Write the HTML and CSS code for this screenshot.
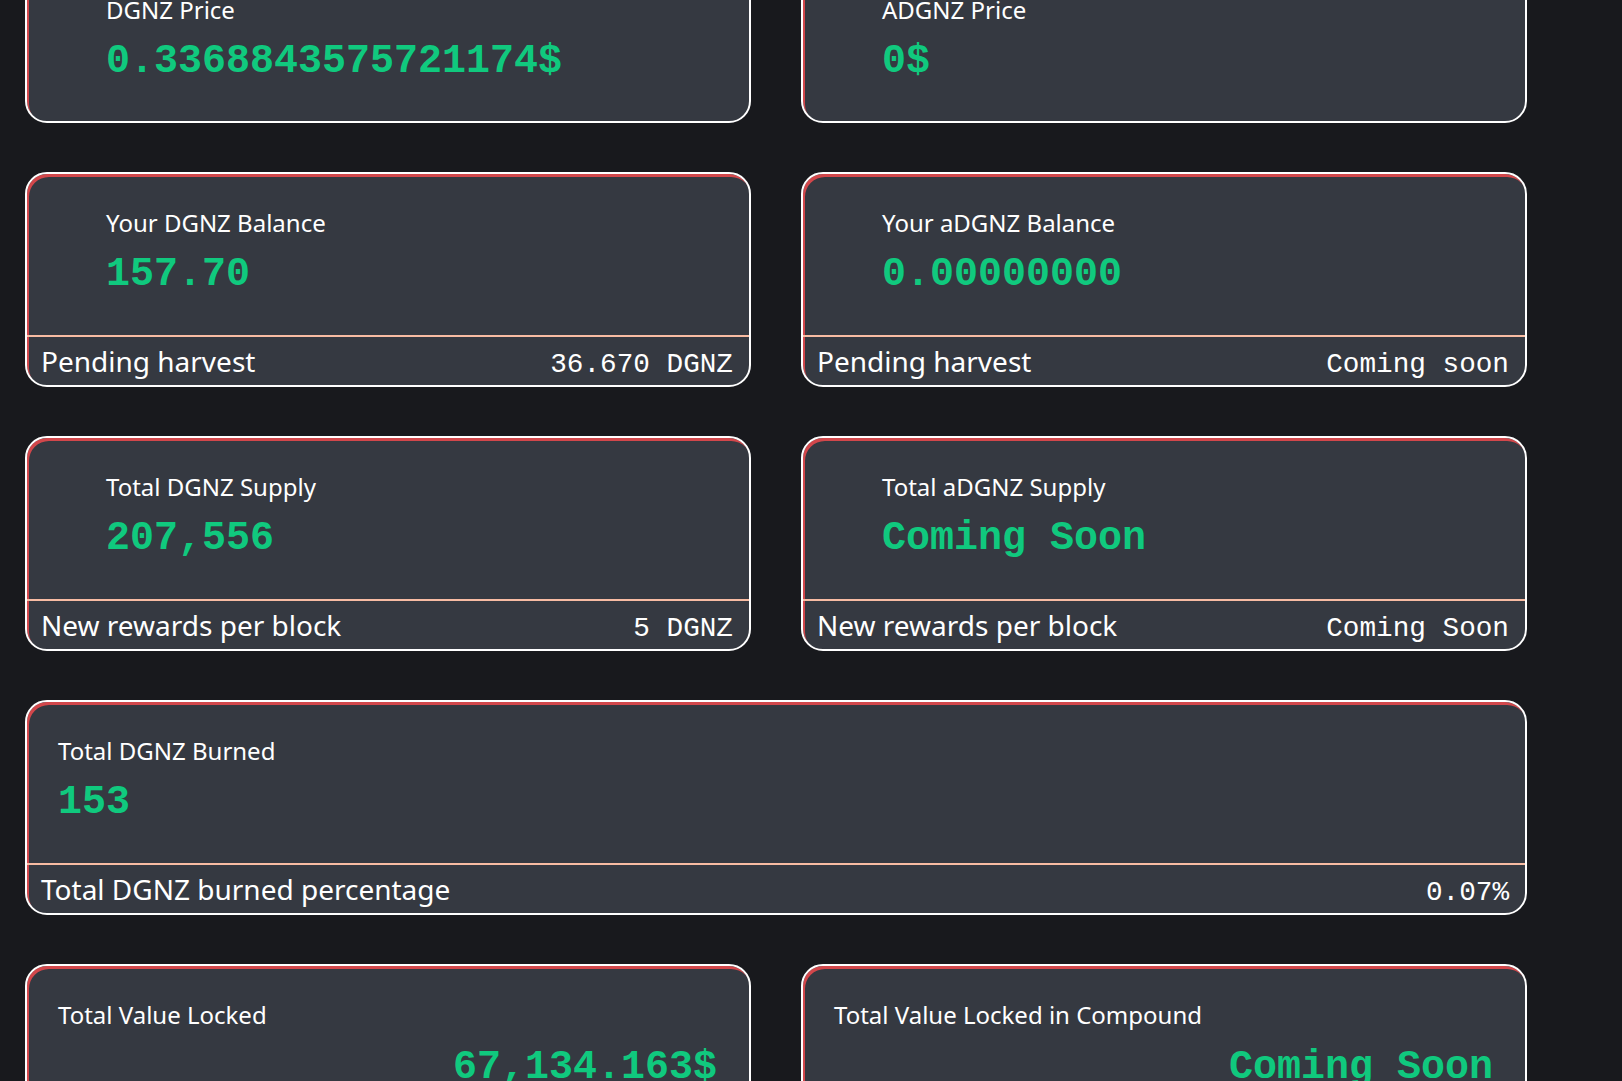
FILE: index.html
```html
<!DOCTYPE html>
<html lang="en">
<head>
<meta charset="utf-8">
<title>DGNZ Dashboard</title>
<link rel="stylesheet" href="styles.css">
</head>
<body>
<main class="dash">
  <section class="card">
    <div class="card-body indent short">
      <div class="label">DGNZ Price</div>
      <div class="value">0.3368843575721174$</div>
    </div>
  </section>
  <section class="card">
    <div class="card-body indent short">
      <div class="label">ADGNZ Price</div>
      <div class="value">0$</div>
    </div>
  </section>

  <section class="card">
    <div class="card-body indent">
      <div class="label">Your DGNZ Balance</div>
      <div class="value">157.70</div>
    </div>
    <div class="card-foot">
      <span class="foot-label">Pending harvest</span>
      <span class="foot-value">36.670 DGNZ</span>
    </div>
  </section>
  <section class="card">
    <div class="card-body indent">
      <div class="label">Your aDGNZ Balance</div>
      <div class="value">0.00000000</div>
    </div>
    <div class="card-foot">
      <span class="foot-label">Pending harvest</span>
      <span class="foot-value">Coming soon</span>
    </div>
  </section>

  <section class="card">
    <div class="card-body indent">
      <div class="label">Total DGNZ Supply</div>
      <div class="value">207,556</div>
    </div>
    <div class="card-foot">
      <span class="foot-label">New rewards per block</span>
      <span class="foot-value">5 DGNZ</span>
    </div>
  </section>
  <section class="card">
    <div class="card-body indent">
      <div class="label">Total aDGNZ Supply</div>
      <div class="value">Coming Soon</div>
    </div>
    <div class="card-foot">
      <span class="foot-label">New rewards per block</span>
      <span class="foot-value">Coming Soon</span>
    </div>
  </section>

  <section class="card wide">
    <div class="card-body">
      <div class="label">Total DGNZ Burned</div>
      <div class="value">153</div>
    </div>
    <div class="card-foot">
      <span class="foot-label">Total DGNZ burned percentage</span>
      <span class="foot-value">0.07%</span>
    </div>
  </section>

  <section class="card">
    <div class="card-body">
      <div class="label">Total Value Locked</div>
      <div class="value right">67,134.163$</div>
    </div>
  </section>
  <section class="card">
    <div class="card-body">
      <div class="label">Total Value Locked in Compound</div>
      <div class="value right">Coming Soon</div>
    </div>
  </section>
</main>
</body>
</html>
```

FILE: styles.css
```css
html, body {
  margin: 0;
  padding: 0;
  background: #18191d;
}

body {
  font-family: "Noto Sans", "Open Sans", sans-serif;
  color: #ffffff;
}

.dash {
  display: grid;
  grid-template-columns: 726px 726px;
  column-gap: 50px;
  row-gap: 49px;
  margin: -41px 0 40px 25px;
  width: 1502px;
}

.card {
  background: #353941;
  border: 2px solid #ffffff;
  border-radius: 22px;
  box-shadow: inset 2px 3px 0 #d2474b;
  overflow: hidden;
  display: flex;
  flex-direction: column;
}

.card.wide {
  grid-column: 1 / span 2;
}

.card-body {
  height: 161px;
  box-sizing: border-box;
  padding: 33px 32px 0 31px;
}

.card-body.indent {
  padding-left: 79px;
}

.card-body.short {
  height: 160px;
}

.label {
  font-size: 24px;
  line-height: 32px;
  white-space: nowrap;
}

.value {
  margin-top: 13px;
  font-family: "Liberation Mono", "Courier New", monospace;
  font-weight: 700;
  font-size: 40px;
  line-height: 45px;
  color: #10c97e;
  white-space: nowrap;
}

.value.right {
  text-align: right;
  margin-top: 14px;
}

.card-foot {
  border-top: 2px solid #f8bca3;
  height: 50px;
  box-sizing: border-box;
  display: flex;
  align-items: baseline;
  justify-content: space-between;
  padding: 2px 16px 0 14px;
}

.foot-label {
  font-size: 28px;
  line-height: 44px;
}

.foot-value {
  font-family: "Liberation Mono", "Courier New", monospace;
  font-size: 27.7px;
  line-height: 44px;
}
```
